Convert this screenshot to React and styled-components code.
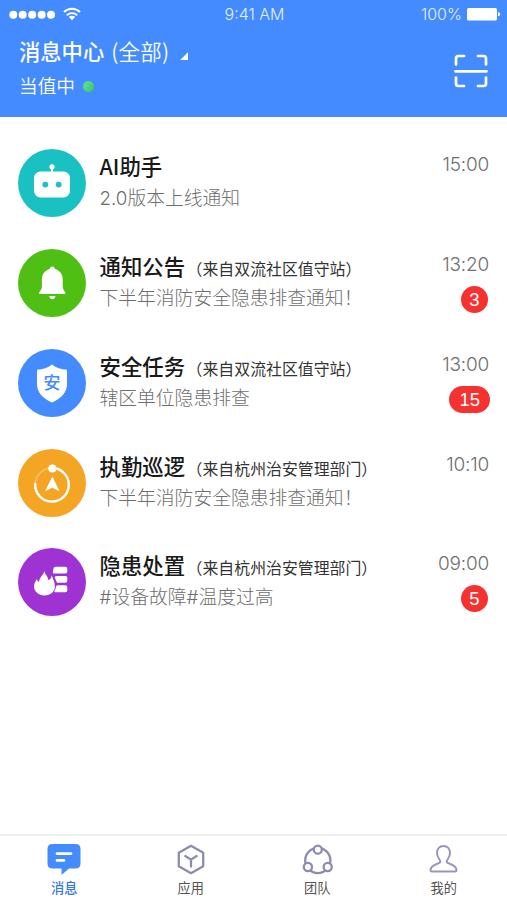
import styled, { createGlobalStyle } from "styled-components"

const GlobalStyle = createGlobalStyle`
body {
  margin: 0;
  background: #fff;
  font-family: "Noto Sans CJK SC", sans-serif;
}
* { box-sizing: border-box; }
`

const Page = styled.div`
display: flex;
flex-direction: column;
width: 100%;
height: 100vh;
overflow: hidden;
`

const Header = styled.header`
height: 117px;
flex: none;
background: #438bff;
color: #fff;
`

const StatusBar = styled.div`
display: grid;
grid-template-columns: 1fr auto 1fr;
align-items: center;
height: 28px;
padding: 0 7px 0 9px;
font-family: Inter, "Liberation Sans", sans-serif;
font-size: 16px;
font-weight: 300;
color: #e6f0ff;
`

const Signal = styled.div`
display: flex;
align-items: center;
gap: 8px;
`

const Clock = styled.div`
letter-spacing: 0;
`

const Power = styled.div`
display: flex;
align-items: center;
justify-content: flex-end;
gap: 5px;
letter-spacing: 0;
`

const HeaderMain = styled.div`
display: flex;
justify-content: space-between;
padding: 6px 19px 0 19px;
`

const Heading = styled.h1`
display: flex;
align-items: baseline;
margin: 0;
font-size: 21.3px;
line-height: 34px;
font-weight: 500;
`

const Scope = styled.span`
margin-left: 7px;
font-weight: 350;
font-size: 21.5px;
letter-spacing: 0.2px;
`

const Caret = styled.i`
width: 8px;
height: 8px;
margin-left: 11px;
margin-bottom: -1px;
background: #fff;
clip-path: polygon(100% 0, 100% 100%, 0 100%);
`

const Duty = styled.div`
display: flex;
align-items: center;
gap: 8px;
font-size: 18.7px;
line-height: 34px;
font-weight: 350;
`

const Online = styled.i`
width: 11px;
height: 11px;
margin-top: 2px;
border-radius: 50%;
background: linear-gradient(135deg, #68e493, #35c565);
`

const ScanButton = styled.button`
width: 34px;
height: 34px;
margin-top: 20px;
padding: 0;
border: 0;
background: none;
color: #fff;
svg { display: block; }
`

const List = styled.main`
flex: 1;
padding: 16.3px 18px 0;
`

const Row = styled.div`
display: flex;
height: 99.75px;
padding-top: 16px;
`

const Avatar = styled.div`
flex: none;
width: 68px;
height: 68px;
border-radius: 50%;
background: ${(props) => props.$color};
svg { display: block; }
`

const Body = styled.div`
flex: 1;
min-width: 0;
padding-left: 13.5px;
white-space: nowrap;
`

const Title = styled.div`
height: 31px;
line-height: 34px;
font-size: 21.4px;
font-weight: 500;
color: #191919;
`

const Source = styled.span`
font-size: 15.9px;
font-weight: 400;
color: #333;
margin-left: 1.5px;
`

const Summary = styled.div`
padding-top: 2px;
line-height: 34px;
font-family: Inter, "Noto Sans CJK SC", sans-serif;
font-size: 18.8px;
font-weight: 300;
color: #6e6e6e;
`

const Side = styled.div`
display: flex;
flex-direction: column;
align-items: flex-end;
`

const Time = styled.div`
height: 37px;
line-height: 31px;
font-family: Inter, "Liberation Sans", sans-serif;
font-size: 19px;
font-weight: 300;
letter-spacing: -0.2px;
color: #707070;
`

const Badge = styled.div`
min-width: 27px;
height: 27px;
margin-right: ${(props) => (props.$wide ? "-1px" : "1px")};
padding: 0 ${(props) => (props.$wide ? "10px" : "0")};
border-radius: 14px;
background: #f53230;
color: #fff;
font-family: "Liberation Sans", sans-serif;
font-size: 18.5px;
line-height: 27px;
text-align: center;
`

const TabBar = styled.nav`
display: grid;
grid-template-columns: repeat(4, 1fr);
flex: none;
height: 66px;
padding-left: 1px;
border-top: 2px solid #efeff1;
`

const Tab = styled.div`
display: flex;
flex-direction: column;
align-items: center;
padding-top: 7px;
font-size: 13.2px;
line-height: 20px;
color: ${(props) => (props.$active ? "#3478df" : "#555")};
font-weight: ${(props) => (props.$active ? 500 : 400)};
svg { display: block; margin-bottom: 1px; }
`

const ShieldText = styled.text`
font-family: "Noto Sans CJK SC", sans-serif;
font-size: 17px;
font-weight: 500;
fill: #438bff;
`

const RobotIcon = () => (
  <svg width="68" height="68" viewBox="0 0 68 68">
    <path d="M34 18v7" stroke="#fff" strokeWidth="1.8" />
    <circle cx="34" cy="17.8" r="2.6" fill="#fff" />
    <rect x="16" y="22.5" width="36" height="26" rx="6.5" fill="#fff" />
    <circle cx="27.3" cy="35.6" r="2.9" fill="#19c1c3" />
    <circle cx="40.7" cy="35.6" r="2.9" fill="#19c1c3" />
  </svg>
)

const BellIcon = () => (
  <svg width="68" height="68" viewBox="0 0 68 68" fill="#fff">
    <path d="M34.3 17.5c1.5 0 2.4.9 2.6 2.5 4.7 1.300 7.800 5 7.800 10.300v6c0 3.200.8 5.200 2.600 6.800V45h-26v-1.900c1.800-1.600 2.600-3.600 2.600-6.800v-6c0-5.300 3.100-9 7.800-10.300.2-1.600 1.100-2.500 2.600-2.500z" />
    <path d="M31.200 47h6.200c-.2 2-1.400 3.200-3.100 3.200s-2.900-1.200-3.100-3.200z" />
  </svg>
)

const ShieldIcon = () => (
  <svg width="68" height="68" viewBox="0 0 68 68">
    <path d="M34 15.5c4 3.3 9 5 15 5.3V35c0 9-6.5 14.500-15 18.500C25.500 49.500 19 44 19 35V20.800c6-.3 11-2 15-5.300z" fill="#fff" />
    <ShieldText x="34" y="39.8" textAnchor="middle">安</ShieldText>
  </svg>
)

const PatrolIcon = () => (
  <svg width="68" height="68" viewBox="0 0 68 68" fill="none">
    <path d="M34 19a16.800 16.800 0 1 1-16.800 16" stroke="#fff" strokeWidth="2.4" strokeLinecap="round" />
    <path d="M17.200 35A16.800 16.800 0 0 1 34 19" stroke="#fff" strokeOpacity=".25" strokeWidth="2" />
    <circle cx="34.3" cy="19.5" r="4" fill="#fff" />
    <path d="M34.300 27.500l7.300 14.700-7.300-3.400-7.300 3.400z" fill="#fff" />
  </svg>
)

const FireIcon = () => (
  <svg width="68" height="68" viewBox="0 0 68 68" fill="#fff">
    <path d="M37.300 18.700h10q2 0 2 2v2.800q0 2-2 2H35.800q-1.300 0-1-1.300l.6-3.500q.4-2 1.900-2z" />
    <path d="M38 28h9.300q2 0 2 2v2.800q0 2-2 2h-8.300q-1-2.500-1.500-3.500t-.8-1.800q.2-1.500 1.300-1.500z" />
    <path d="M39.500 37.300h7.800q2 0 2 2v3q0 2-2 2H37q-1.200 0-.6-1.200 1.500-2.600 1.500-4.300.2-1.500 1.600-1.500z" />
    <path d="M26.800 22.800c-.6 4 3.200 4.600 3.600 9.400 1.900-.7 3-2.400 3.400-4.900 1 3.800 3.100 6.400 3.100 10.900 0 5.600-4.500 9.200-10.300 9.200-6 0-10.600-3.800-10.600-9.200 0-3 1.800-4.800 2.900-7.200.5 1.600 1 2.500 2.200 3 .2-4.700 3.700-6.200 5.700-11.200z" />
  </svg>
)

const ScanIcon = () => (
  <svg width="34" height="34" viewBox="0 0 34 34" fill="none" stroke="currentColor" strokeWidth="2.7" strokeLinecap="round" strokeLinejoin="round">
    <path d="M2 10.500V4.500Q2 2 4.500 2h5.500M24 2h5.500Q32 2 32 4.500v6M32 23.500v6q0 2.500-2.500 2.500H24M10 32H4.500Q2 32 2 29.500v-6M1.500 17.300h31" />
  </svg>
)

const WifiIcon = () => (
  <svg width="18" height="14" viewBox="0 0 18 14" fill="none" stroke="#fff" strokeWidth="1.9">
    <path d="M1 5a11.500 11.500 0 0 1 16 0M3.800 8.200a7.500 7.500 0 0 1 10.400 0" />
    <path d="M9 13.300l-3.200-3.200a4.600 4.600 0 0 1 6.400 0z" fill="#fff" stroke="none" />
  </svg>
)

const DotsIcon = () => (
  <svg width="46" height="9" viewBox="0 0 46 9" fill="#fff">
    {[4.3, 13.7, 23.2, 32.7, 42].map((x) => (
      <circle key={x} cx={x} cy="4.8" r="4" />
    ))}
  </svg>
)

const BatteryIcon = () => (
  <svg width="33" height="14" viewBox="0 0 33 14" fill="#fff">
    <rect x="0" y="1" width="30" height="12.5" rx="1.5" />
    <path d="M31 5.200q2.300.3 2.300 2t-2.300 2z" />
  </svg>
)

const MessageIcon = () => (
  <svg width="34" height="34" viewBox="0 0 34 34">
    <path d="M5.500 1h23q5 0 5 5v14.500q0 5-5 5h-6.500L14.500 32v-6.500h-9q-5 0-5-5V6q0-5 5-5z" fill="#438bff" />
    <path d="M10 10.600h14M10 17.400h7" stroke="#fff" strokeWidth="2.7" strokeLinecap="round" />
  </svg>
)

const AppsIcon = () => (
  <svg width="34" height="34" viewBox="0 0 34 34" fill="none" stroke="#8e8bb0" strokeWidth="2.3" strokeLinejoin="round" strokeLinecap="round">
    <path d="M17 2.800l12.200 6.900v13.600L17 30.200 4.800 23.300V9.700z" />
    <path d="M11.300 13l5.700 3.600 5.700-3.600M17 16.600v6.900" />
  </svg>
)

const TeamIcon = () => (
  <svg width="34" height="34" viewBox="0 0 34 34" fill="#fff" stroke="#8e8bb3" strokeWidth="2.3">
    <circle cx="17.8" cy="17.5" r="12.6" />
    <circle cx="17.8" cy="6.7" r="4" />
    <circle cx="7.900" cy="24" r="4.1" />
    <circle cx="27.700" cy="24" r="4.1" />
  </svg>
)

const MineIcon = () => (
  <svg width="34" height="34" viewBox="0 0 34 34" fill="none" stroke="#9996bd" strokeWidth="2" strokeLinejoin="round">
    <path d="M13.300 19c.6-2-3.300-3.800-3.300-9 0-4.200 2.600-7 6.500-7s6.500 2.800 6.500 7c0 5.200-3.900 7-3.300 9 .5 1.800 9.800 2.600 9.800 8q0 1.500-1.500 1.500H5q-1.500 0-1.500-1.500c0-5.400 9.300-6.200 9.800-8z" />
  </svg>
)

const messages = [
  { title: "AI助手", summary: "2.0版本上线通知", time: "15:00", color: "#19c1c3", icon: RobotIcon },
  { title: "通知公告", source: "（来自双流社区值守站）", summary: "下半年消防安全隐患排查通知！", time: "13:20", count: 3, color: "#4fc013", icon: BellIcon },
  { title: "安全任务", source: "（来自双流社区值守站）", summary: "辖区单位隐患排查", time: "13:00", count: 15, color: "#438bff", icon: ShieldIcon },
  { title: "执勤巡逻", source: "（来自杭州治安管理部门）", summary: "下半年消防安全隐患排查通知！", time: "10:10", color: "#f4a524", icon: PatrolIcon },
  { title: "隐患处置", source: "（来自杭州治安管理部门）", summary: "#设备故障#温度过高", time: "09:00", count: 5, color: "#9f32d2", icon: FireIcon },
]

const tabs = [
  { label: "消息", icon: MessageIcon, active: true },
  { label: "应用", icon: AppsIcon },
  { label: "团队", icon: TeamIcon },
  { label: "我的", icon: MineIcon },
]

export default function App() {
  return (
    <Page>
      <GlobalStyle />
      <Header>
        <StatusBar>
          <Signal>
            <DotsIcon />
            <WifiIcon />
          </Signal>
          <Clock>9:41 AM</Clock>
          <Power>
            100%
            <BatteryIcon />
          </Power>
        </StatusBar>
        <HeaderMain>
          <div>
            <Heading>
              消息中心<Scope>(全部)</Scope>
              <Caret />
            </Heading>
            <Duty>当值中<Online /></Duty>
          </div>
          <ScanButton aria-label="扫一扫"><ScanIcon /></ScanButton>
        </HeaderMain>
      </Header>
      <List>
        {messages.map(({ icon: Icon, ...m }) => (
          <Row key={m.title}>
            <Avatar $color={m.color}><Icon /></Avatar>
            <Body>
              <Title>
                {m.title}
                {m.source && <Source>{m.source}</Source>}
              </Title>
              <Summary>{m.summary}</Summary>
            </Body>
            <Side>
              <Time>{m.time}</Time>
              {m.count && <Badge $wide={m.count > 9}>{m.count}</Badge>}
            </Side>
          </Row>
        ))}
      </List>
      <TabBar>
        {tabs.map(({ icon: Icon, label, active }) => (
          <Tab key={label} $active={active}>
            <Icon />
            {label}
          </Tab>
        ))}
      </TabBar>
    </Page>
  )
}
